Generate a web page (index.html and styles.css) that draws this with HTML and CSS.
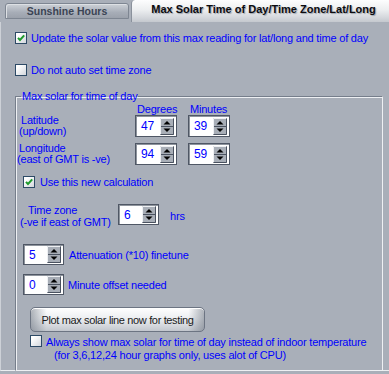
FILE: index.html
```html
<!DOCTYPE html>
<html>
<head>
<meta charset="utf-8">
<link rel="stylesheet" href="styles.css">
</head>
<body>
<div class="tabs">
  <div class="tab tab-off">Sunshine Hours</div>
  <div class="tab tab-on">Max Solar Time of Day/Time Zone/Lat/Long</div>
</div>
<div class="panel">
  <div class="check">
    <span class="cb"><svg width="10" height="10" viewBox="0 0 10 10"><path d="M2 4.8l2 2.2L8.2 2.4" fill="none" stroke="#1e9a2c" stroke-width="2"/></svg></span>
    <span>Update the solar value from this max reading for lat/long and time of day</span>
  </div>
  <div class="check row2">
    <span class="cb"></span>
    <span>Do not auto set time zone</span>
  </div>
  <fieldset class="group">
    <legend>Max solar for time of day</legend>
    <div class="hdrrow">
      <span class="hdr">Degrees</span>
      <span class="hdr">Minutes</span>
    </div>
    <div class="crow">
      <div class="lbl"><span class="p5">Latitude</span><span class="p3">(up/down)</span></div>
      <div class="spin"><span class="val">47</span><svg class="arr" width="14" height="17" viewBox="0 0 14 17"><rect width="14" height="17" fill="#a8aeb7"/><path d="M0.5 16.5V0.5H13.5" stroke="#eef0f3" fill="none"/><path d="M13.5 0.5V16.5H0.5" stroke="#4a5260" fill="none"/><path d="M1 8.5H13" stroke="#4a5260"/><path d="M3.5 6.5L7 3L10.5 6.5Z" fill="#000"/><path d="M3.5 10.5H10.5L7 14Z" fill="#000"/></svg></div>
      <div class="spin"><span class="val">39</span><svg class="arr" width="14" height="17" viewBox="0 0 14 17"><rect width="14" height="17" fill="#a8aeb7"/><path d="M0.5 16.5V0.5H13.5" stroke="#eef0f3" fill="none"/><path d="M13.5 0.5V16.5H0.5" stroke="#4a5260" fill="none"/><path d="M1 8.5H13" stroke="#4a5260"/><path d="M3.5 6.5L7 3L10.5 6.5Z" fill="#000"/><path d="M3.5 10.5H10.5L7 14Z" fill="#000"/></svg></div>
    </div>
    <div class="crow long">
      <div class="lbl"><span class="p3">Longitude</span><span class="p1">(east of GMT is -ve)</span></div>
      <div class="spin"><span class="val">94</span><svg class="arr" width="14" height="17" viewBox="0 0 14 17"><rect width="14" height="17" fill="#a8aeb7"/><path d="M0.5 16.5V0.5H13.5" stroke="#eef0f3" fill="none"/><path d="M13.5 0.5V16.5H0.5" stroke="#4a5260" fill="none"/><path d="M1 8.5H13" stroke="#4a5260"/><path d="M3.5 6.5L7 3L10.5 6.5Z" fill="#000"/><path d="M3.5 10.5H10.5L7 14Z" fill="#000"/></svg></div>
      <div class="spin"><span class="val">59</span><svg class="arr" width="14" height="17" viewBox="0 0 14 17"><rect width="14" height="17" fill="#a8aeb7"/><path d="M0.5 16.5V0.5H13.5" stroke="#eef0f3" fill="none"/><path d="M13.5 0.5V16.5H0.5" stroke="#4a5260" fill="none"/><path d="M1 8.5H13" stroke="#4a5260"/><path d="M3.5 6.5L7 3L10.5 6.5Z" fill="#000"/><path d="M3.5 10.5H10.5L7 14Z" fill="#000"/></svg></div>
    </div>
    <div class="check use">
      <span class="cb"><svg width="10" height="10" viewBox="0 0 10 10"><path d="M2 4.8l2 2.2L8.2 2.4" fill="none" stroke="#1e9a2c" stroke-width="2"/></svg></span>
      <span>Use this new calculation</span>
    </div>
    <div class="tz">
      <div class="tzl"><span class="p12">Time zone</span><span class="p4">(-ve if east of GMT)</span></div>
      <div class="spin sm"><span class="val">6</span><svg class="arr" width="14" height="17" viewBox="0 0 14 17"><rect width="14" height="17" fill="#a8aeb7"/><path d="M0.5 16.5V0.5H13.5" stroke="#eef0f3" fill="none"/><path d="M13.5 0.5V16.5H0.5" stroke="#4a5260" fill="none"/><path d="M1 8.5H13" stroke="#4a5260"/><path d="M3.5 6.5L7 3L10.5 6.5Z" fill="#000"/><path d="M3.5 10.5H10.5L7 14Z" fill="#000"/></svg></div>
      <span class="hrs">hrs</span>
    </div>
    <div class="srow att">
      <div class="spin sm"><span class="val">5</span><svg class="arr" width="14" height="17" viewBox="0 0 14 17"><rect width="14" height="17" fill="#a8aeb7"/><path d="M0.5 16.5V0.5H13.5" stroke="#eef0f3" fill="none"/><path d="M13.5 0.5V16.5H0.5" stroke="#4a5260" fill="none"/><path d="M1 8.5H13" stroke="#4a5260"/><path d="M3.5 6.5L7 3L10.5 6.5Z" fill="#000"/><path d="M3.5 10.5H10.5L7 14Z" fill="#000"/></svg></div>
      <span>Attenuation (*10) finetune</span>
    </div>
    <div class="srow off">
      <div class="spin sm"><span class="val">0</span><svg class="arr" width="14" height="17" viewBox="0 0 14 17"><rect width="14" height="17" fill="#a8aeb7"/><path d="M0.5 16.5V0.5H13.5" stroke="#eef0f3" fill="none"/><path d="M13.5 0.5V16.5H0.5" stroke="#4a5260" fill="none"/><path d="M1 8.5H13" stroke="#4a5260"/><path d="M3.5 6.5L7 3L10.5 6.5Z" fill="#000"/><path d="M3.5 10.5H10.5L7 14Z" fill="#000"/></svg></div>
      <span>Minute offset needed</span>
    </div>
    <button class="plot">Plot max solar line now for testing</button>
    <div class="always">
      <span class="cb"></span>
      <span class="two"><span>Always show max solar for time of day instead of indoor temperature</span><span class="ind">(for 3,6,12,24 hour graphs only, uses alot of CPU)</span></span>
    </div>
  </fieldset>
</div>
</body>
</html>
```
FILE: styles.css
```css
html, body {
  margin: 0;
  padding: 0;
}
body {
  width: 389px;
  height: 374px;
  overflow: hidden;
  background: #a9afb9;
  font-family: "Liberation Sans", Arial, sans-serif;
  font-size: 11px;
  letter-spacing: -0.2px;
  color: #0000ff;
}
.tabs {
  display: flex;
  height: 22px;
}
.tab {
  box-sizing: border-box;
  display: flex;
  align-items: center;
  justify-content: center;
  font-family: "Liberation Sans", Arial, sans-serif;
  font-weight: bold;
  letter-spacing: 0;
  white-space: nowrap;
}
.tab-off {
  margin: 3px 0 3px 5px;
  width: 124px;
  border: 1px solid #7e8692;
  border-radius: 3px 3px 0 0;
  background: linear-gradient(#cdd1d7, #a7adb7 60%, #9ba1ab);
  box-shadow: inset 1px 1px 0 #dde0e4;
  color: #3b4454;
  font-size: 10.5px;
}
.tab-on {
  margin-left: 2px;
  flex: 1;
  border-left: 1px solid #8a919c;
  border-radius: 4px 0 0 0;
  background: linear-gradient(#fdfdfe, #eceef0 45%, #d4d7dc 80%, #c4c8ce);
  color: #0c0c10;
  text-shadow: 1px 1px 1px #9ca2ab;
  font-size: 11px;
  padding: 0 0 4px 6px;
}
.panel {
  box-sizing: border-box;
  height: 349px;
  border-left: 1px solid #cdd1d7;
  border-bottom: 1px solid #eceef1;
  padding: 9px 0 0 14px;
}
.check {
  display: flex;
  align-items: center;
  gap: 4px;
  height: 14px;
  line-height: 14px;
  white-space: nowrap;
}
.row2 {
  margin-top: 18px;
}
.cb {
  flex: none;
  box-sizing: border-box;
  width: 12px;
  height: 12px;
  border: 1px solid #2d4a66;
  background: linear-gradient(135deg, #ffffff 20%, #d3d7dd);
  display: flex;
  align-items: center;
  justify-content: center;
}
.cb svg {
  display: block;
}
.group {
  margin: 13px 0 0 0;
  padding: 0 0 8px 0;
  width: 368px;
  box-sizing: border-box;
  min-width: 0;
  border: 1px solid;
  border-color: #767e8b #eef0f3 #eef0f3 #767e8b;
  box-shadow: inset 1px 1px 0 #eef0f3;
}
.group legend {
  padding: 0 1px;
  margin-left: 5px;
  line-height: 13px;
}
.hdrrow {
  display: flex;
  height: 12px;
  line-height: 12px;
  padding-left: 121px;
}
.hdr {
  width: 53px;
}
.crow {
  display: flex;
  gap: 11px;
  height: 22px;
}
.long {
  margin-top: 6px;
}
.lbl {
  width: 108px;
  display: flex;
  flex-direction: column;
  line-height: 11px;
  white-space: nowrap;
}
.p1 { padding-left: 1px; }
.p3 { padding-left: 3px; }
.p4 { padding-left: 4px; }
.p5 { padding-left: 5px; }
.p12 { padding-left: 12px; }
.spin {
  flex: none;
  box-sizing: border-box;
  width: 42px;
  height: 22px;
  border: 1px solid #4f5765;
  box-shadow: inset 1px 1px 0 #8e949d;
  background: #fff;
  display: flex;
  align-items: center;
  justify-content: space-between;
  padding: 0 2px 0 5px;
  font-size: 12px;
}
.spin.sm {
  width: 41px;
  height: 21px;
}
.arr {
  display: block;
}
.val {
  line-height: 14px;
}
.use {
  margin-top: 10px;
  padding-left: 7px;
  gap: 5px;
}
.tz {
  display: flex;
  align-items: flex-start;
  margin-top: 15px;
}
.tzl {
  width: 102px;
  display: flex;
  flex-direction: column;
  line-height: 12px;
  white-space: nowrap;
}
.hrs {
  align-self: center;
  margin-left: 11px;
}
.srow {
  display: flex;
  align-items: center;
  gap: 5px;
  padding-left: 7px;
  white-space: nowrap;
}
.att {
  margin-top: 16px;
}
.off {
  margin-top: 9px;
  gap: 4px;
}
.plot {
  display: block;
  margin: 12px 0 0 14px;
  width: 175px;
  height: 25px;
  padding: 0;
  border: 1px solid #6c7482;
  border-radius: 5px;
  background:
    linear-gradient(90deg, rgba(110,118,130,.55), rgba(110,118,130,0) 9%, rgba(110,118,130,0) 91%, rgba(110,118,130,.55)),
    linear-gradient(#ffffff, #eceef1 45%, #d6d9de 75%, #c2c6cd);
  box-shadow: inset 0 1px 0 #fff;
  font-family: "Liberation Sans", Arial, sans-serif;
  font-size: 11px;
  letter-spacing: -0.35px;
  color: #1a1a1a;
}
.always {
  display: flex;
  align-items: flex-start;
  gap: 4px;
  margin-top: 4px;
  padding-left: 14px;
  white-space: nowrap;
}
.always .cb {
  margin-top: -1px;
}
.two {
  display: flex;
  flex-direction: column;
  line-height: 13px;
}
.ind {
  padding-left: 8px;
}
```
